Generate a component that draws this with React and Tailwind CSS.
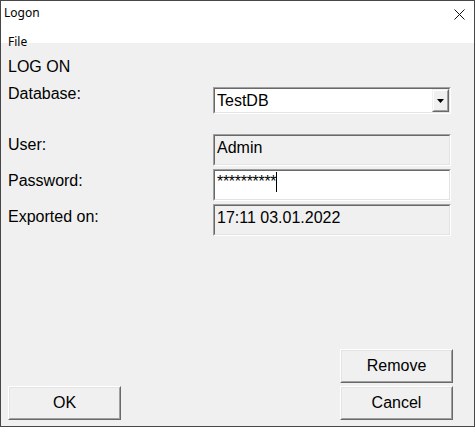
import React from 'react';

const ui = { fontFamily: '"Noto Sans", "Segoe UI", sans-serif' };
const arial = { fontFamily: '"Liberation Sans", Arial, sans-serif' };

// sunken 3D edit box (classic Win32 look)
function Sunken({ children, white, className = '' }) {
  return (
    <div className={`border border-t-[#a0a0a0] border-l-[#a0a0a0] border-b-white border-r-white ${className}`}>
      <div
        className={`h-full border border-t-[#696969] border-l-[#696969] border-b-[#e3e3e3] border-r-[#e3e3e3] ${
          white ? 'bg-white' : 'bg-[#f0f0f0]'
        }`}
      >
        {children}
      </div>
    </div>
  );
}

function Button({ label }) {
  return (
    <div className="w-[113px] h-[34px] border border-t-white border-l-white border-b-[#696969] border-r-[#696969]">
      <div className="h-full flex items-center justify-center bg-[#f0f0f0] border border-t-[#e3e3e3] border-l-[#e3e3e3] border-b-[#a0a0a0] border-r-[#a0a0a0] text-[16px] leading-[18px] text-black">
        {label}
      </div>
    </div>
  );
}

function Row({ label, labelOffset, children, className = '' }) {
  return (
    <div className={`flex items-start ${className}`}>
      <div className={`w-[205px] text-[16px] leading-[18px] text-black ${labelOffset}`}>{label}</div>
      {children}
    </div>
  );
}

export default function App() {
  return (
    <div className="w-[475px] h-[427px] border border-[#474747] flex flex-col bg-[#f0f0f0] overflow-hidden">
      {/* title bar */}
      <div className="h-[23px] bg-white flex items-start justify-between pl-[3px] pt-[4px] pr-[9px]" style={ui}>
        <span className="text-[12px] leading-[16px] text-black">Logon</span>
        <svg width="11" height="11" viewBox="0 0 11 11" className="mt-[4px]">
          <path d="M0.5 0.5 L10.5 10.5 M10.5 0.5 L0.5 10.5" stroke="#111" strokeWidth="1" fill="none" />
        </svg>
      </div>
      {/* menu bar */}
      <div className="h-[19px] bg-white pl-[7px] pt-[4px]" style={ui}>
        <span className="text-[12px] leading-[16px] text-black">File</span>
      </div>

      {/* body */}
      <div className="flex-1 flex flex-col pl-[7px]" style={arial}>
        <div className="pt-[15px] text-[16px] leading-[18px] text-black">LOG ON</div>

        <Row label="Database:" labelOffset="mt-0" className="mt-[9px]">
          <Sunken white className="w-[238px] h-[27px] mt-[2px]">
            <div className="h-full flex items-center">
              <span className="flex-1 pl-[2px] text-[16px] leading-[18px] text-black">TestDB</span>
              <div className="w-[17px] h-full border border-t-[#f0f0f0] border-l-[#f0f0f0] border-b-[#696969] border-r-[#696969] bg-[#f0f0f0]">
                <div className="h-full flex items-center justify-center border border-t-white border-l-white border-b-[#a0a0a0] border-r-[#a0a0a0]">
                  <svg width="7" height="4" viewBox="0 0 7 4">
                    <path d="M0 0 H7 L3.5 4 Z" fill="#000" />
                  </svg>
                </div>
              </div>
            </div>
          </Sunken>
        </Row>

        <Row label="User:" labelOffset="mt-[2px]" className="mt-[20px]">
          <Sunken className="w-[238px] h-[32px]">
            <div className="pl-[2px] pt-[3px] text-[16px] leading-[18px] text-black">Admin</div>
          </Sunken>
        </Row>

        <Row label="Password:" labelOffset="mt-[3px]" className="mt-[3px]">
          <Sunken white className="w-[238px] h-[32px]">
            <div className="pl-[2px] pt-[1px] flex items-start text-[16px] leading-[20px] text-black">
              <span className="tracking-[-0.3px]">**********</span>
              <span className="inline-block w-px h-[20px] bg-black"></span>
            </div>
          </Sunken>
        </Row>

        <Row label="Exported on:" labelOffset="mt-[4px]" className="mt-[3px]">
          <Sunken className="w-[238px] h-[32px]">
            <div className="pl-[2px] pt-[3px] text-[16px] leading-[18px] text-black">17:11 03.01.2022</div>
          </Sunken>
        </Row>

        <div className="flex-1" />

        <div className="flex items-end pb-[6px]">
          <Button label="OK" />
          <div className="ml-auto mr-[21px] flex flex-col gap-[3px]">
            <Button label="Remove" />
            <Button label="Cancel" />
          </div>
        </div>
      </div>
    </div>
  );
}
